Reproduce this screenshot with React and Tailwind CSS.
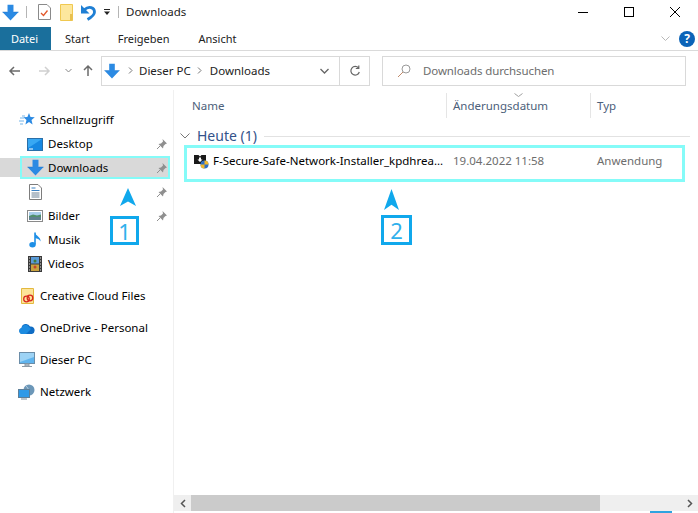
const F = "font-['Noto_Sans',sans-serif]";

function DownArrow({ s = 20, className = "" }) {
  return (
    <svg width={s} height={s} viewBox="0 0 20 20" className={className}>
      <path d="M6.500 1h7v8.500h6L10 19.500.500 9.500h6z" fill="#2b8ae3" />
      <path d="M.5 9.500h6M13.500 9.500h6" stroke="#1e73c8" strokeWidth=".6" />
    </svg>
  );
}
function Pin() {
  return (
    <svg width="12" height="12" viewBox="0 0 12 12" className="shrink-0">
      <path d="M6.500 1l4.500 4.500-1.500.5-2 2-.5 2.500L2.500 6l2.500-.5 2-2z" fill="#8f8f8f" />
      <path d="M4 8l-3 3" stroke="#8f8f8f" strokeWidth="1" />
    </svg>
  );
}
function Star() {
  return (
    <svg width="16" height="16" viewBox="0 0 16 16">
      <path d="M10 1l1.500 4 4.300.3-3.300 2.700 1.100 4.500L10 10l-3.600 2.500L7.500 8 4.400 5.300l4-.3z" fill="#2b8ae3" />
      <path d="M1 6h4M0 9h5M1 12h3M3 4h3" stroke="#74b5ea" strokeWidth="1" />
    </svg>
  );
}
function Desktop() {
  return (
    <svg width="16" height="13" viewBox="0 0 16 13">
      <rect x=".5" y=".5" width="15" height="12" fill="#1788e2" stroke="#2a6fa8" />
      <path d="M1 1h14L2 9.500H1z" fill="#38a8f3" />
      <path d="M2 11h4" stroke="#fff" />
    </svg>
  );
}
function DocIcon() {
  return (
    <svg width="13" height="16" viewBox="0 0 13 16">
      <path d="M.5.500h8.500l3.500 3.500v11.500H.5z" fill="#fff" stroke="#7d7d7d" />
      <path d="M2.500 4h4M2.500 6.500h8" stroke="#3b82c4" />
      <path d="M2.500 9h8M2.500 11h8M2.500 13h8" stroke="#6b8094" />
    </svg>
  );
}
function Pic() {
  return (
    <svg width="16" height="12" viewBox="0 0 16 12">
      <rect x=".5" y=".5" width="15" height="11" fill="#fff" stroke="#8a8a8a" />
      <rect x="2" y="2" width="12" height="4" fill="#a9cdea" />
      <path d="M2 6l4-1.500 4 1 4-1V7H2z" fill="#4f8f6a" />
      <rect x="2" y="7" width="12" height="3" fill="#5f7f8f" />
    </svg>
  );
}
function Note() {
  return (
    <svg width="12" height="16" viewBox="0 0 12 16">
      <path d="M6 .5v12" stroke="#1e8fe6" strokeWidth="1.600" />
      <ellipse cx="3.500" cy="12.800" rx="3.200" ry="2.700" fill="#1e8fe6" />
      <path d="M6 .5c.5 3.500 6 4 5.500 9-1-2.500-3.500-3-5.500-3.500z" fill="#1e8fe6" />
    </svg>
  );
}
function Film() {
  return (
    <svg width="14" height="16" viewBox="0 0 14 16">
      <rect width="14" height="16" fill="#3a3a3a" />
      <rect x="3" y="1" width="8" height="6.500" fill="#5a9bd8" />
      <rect x="3" y="8.500" width="8" height="6.500" fill="#c9a23f" />
      <circle cx="7" cy="5" r="1.500" fill="#3f7a3f" />
      <circle cx="7" cy="11" r="1.500" fill="#c2452d" />
      <path d="M1 2h1M1 5h1M1 8h1M1 11h1M1 14h1M12 2h1M12 5h1M12 8h1M12 11h1M12 14h1" stroke="#ddd" />
    </svg>
  );
}
function CC() {
  return (
    <svg width="13" height="16" viewBox="0 0 13 16">
      <path d="M.5.500h12v15H.5z" fill="#fde49a" stroke="#e3b93f" />
      <circle cx="5.500" cy="11" r="2.800" fill="none" stroke="#d8281f" strokeWidth="1.300" />
      <circle cx="9" cy="10" r="2.800" fill="none" stroke="#d8281f" strokeWidth="1.300" />
    </svg>
  );
}
function Cloud() {
  return (
    <svg width="16" height="11" viewBox="0 0 16 11">
      <path d="M3 11a3 3 0 0 1-.5-5.900A4.500 4.500 0 0 1 11 3.500 3.800 3.800 0 0 1 15.500 8 3 3 0 0 1 13 11z" fill="#0f6cc4" />
      <path d="M3 11a3 3 0 0 1-.5-5.900A4.500 4.500 0 0 1 8 2l4 4-5 5z" fill="#1c8be0" />
    </svg>
  );
}
function Monitor() {
  return (
    <svg width="16" height="16" viewBox="0 0 16 16">
      <rect x=".5" y=".5" width="15" height="11" fill="#5fb4ee" stroke="#6b8da8" />
      <path d="M1 1h14v4L1 10z" fill="#9dd3f5" />
      <path d="M6 12h4v2H6zM3 14.500h10" stroke="#8d9aa5" fill="#c5ccd2" />
    </svg>
  );
}
function Net() {
  return (
    <svg width="18" height="16" viewBox="0 0 18 16">
      <circle cx="11" cy="6" r="5.500" fill="#6c97b8" />
      <path d="M8 2c2 2 4 5 2 9" stroke="#c0d4e2" fill="none" />
      <rect x=".5" y="5.500" width="11" height="8" fill="#2f9ae8" stroke="#5d7f99" />
      <path d="M3 15h6" stroke="#7d8d99" />
    </svg>
  );
}
function Help() {
  return (
    <div className="w-4 h-4 rounded-full bg-[#0b63b8] text-white text-[12px] font-bold flex items-center justify-center leading-none">?</div>
  );
}
function Installer() {
  return (
    <svg width="15" height="15" viewBox="0 0 15 15">
      <path d="M0 1h4.500l1.500 1.500L7.500 1H12v9H0z" fill="#1a1a1a" />
      <path d="M5 3.500h2v2h1.500L6 8 3.500 5.500H5z" fill="#fff" />
      <circle cx="10.500" cy="10.500" r="4" fill="#2f6fc4" />
      <path d="M10.500 6.500a4 4 0 0 1 4 4h-4zM10.500 10.500v4a4 4 0 0 1-4-4z" fill="#f2b72a" />
    </svg>
  );
}

function NavRow({ icon, label, pin, selected }) {
  return (
    <div className={selected ? "h-[19px] w-[168px] mt-[2px] mb-[3px] flex items-center bg-[#d9d9d9]" : "h-6 flex items-center"}>
      <div className="w-[48px] pl-[26px] pr-[4px] shrink-0 flex justify-center">{icon}</div>
      <span className="flex-1 text-[11.5px] text-black whitespace-nowrap">{label}</span>
      {pin && <div className={selected ? "" : "pr-[5px]"}><Pin /></div>}
    </div>
  );
}
function TopRow({ icon, label, mt }) {
  return (
    <div className={`h-6 flex items-center ${mt}`}>
      <div className="w-[40px] pl-[16px] pr-[2px] shrink-0 flex justify-center">{icon}</div>
      <span className="text-[11.5px] text-black whitespace-nowrap">{label}</span>
    </div>
  );
}
function Marker({ n, className, arrowClass }) {
  return (
    <>
      <svg viewBox="0 0 16 20" preserveAspectRatio="none" className={`absolute ${arrowClass}`}>
        <path d="M8 0l8 20-8-5-8 5z" fill="#10a8ec" />
      </svg>
      <div className={`absolute border-[3px] border-[#10a8ec] flex items-center justify-center text-[22px] leading-none text-[#2fb0ec] ${className}`}>{n}</div>
    </>
  );
}

export default function App() {
  return (
    <div className={`${F} relative w-[698px] h-[513px] bg-white overflow-hidden flex flex-col`}>
      {/* title bar */}
      <div className="h-[27px] pb-[3px] flex items-center shrink-0">
        <DownArrow s={17} className="ml-[2px]" />
        <div className="w-px h-3 bg-[#b5b5b5] ml-[7px]" />
        <svg width="13" height="16" viewBox="0 0 13 16" className="ml-[11px]">
          <path d="M.5.500h8.500l3.500 3.500v11.500H.5z" fill="#fff" stroke="#8a8a8a" />
          <path d="M3 9l2.500 2.500L9.500 6.500" stroke="#e2572a" strokeWidth="1.300" fill="none" />
        </svg>
        <svg width="13" height="17" viewBox="0 0 13 17" className="ml-[9px]">
          <path d="M.5.500h12v16H.5z" fill="#fde79d" stroke="#f0c850" />
          <path d="M10 10h2.500v6.500H10z" fill="#e8c050" />
        </svg>
        <svg width="15" height="17" viewBox="0 0 15 17" className="ml-[8px]">
          <path d="M0 1v8.500h8.500z" fill="#1f7fd4" />
          <path d="M3.500 5.500C8 1.500 13.500 3.500 13.500 8c0 3.500-3.500 5.500-7 7.500" stroke="#1f7fd4" strokeWidth="2.800" fill="none" />
        </svg>
        <svg width="8" height="8" viewBox="0 0 8 8" className="ml-[7px]">
          <path d="M1 1.500h6" stroke="#222" />
          <path d="M1 3.500h6L4 7z" fill="#222" />
        </svg>
        <div className="w-px h-3 bg-[#b5b5b5] ml-[7px]" />
        <span className="text-[11.5px] ml-[7px] text-[#222]">Downloads</span>
        <div className="flex-1" />
        <div className="w-[46px] flex justify-center">
          <svg width="10" height="10" viewBox="0 0 10 10"><path d="M0 5.500h10" stroke="#000" /></svg>
        </div>
        <div className="w-[46px] flex justify-center">
          <svg width="10" height="10" viewBox="0 0 10 10"><rect x=".5" y=".5" width="9" height="9" fill="none" stroke="#000" /></svg>
        </div>
        <div className="w-[46px] flex justify-center">
          <svg width="10" height="10" viewBox="0 0 10 10"><path d="M0 0l10 10M10 0L0 10" stroke="#000" /></svg>
        </div>
      </div>
      {/* tabs */}
      <div className="h-[24px] flex items-stretch border-b border-[#dadada] shrink-0 text-[11px] text-[#222]">
        <div className="w-[51px] bg-[#1a6f9c] text-white flex items-center justify-center pr-[2px] pt-px">Datei</div>
        <div className="ml-[14px] pt-px flex items-center">Start</div>
        <div className="ml-[28px] pt-px flex items-center">Freigeben</div>
        <div className="ml-[29px] pt-px flex items-center">Ansicht</div>
        <div className="flex-1" />
        <div className="flex items-center gap-[9px] pr-[3px]">
          <svg width="9" height="5" viewBox="0 0 9 5"><path d="M.5.500l4 4 4-4" stroke="#b8b8b8" fill="none" /></svg>
          <Help />
        </div>
      </div>
      {/* address */}
      <div className="h-[39px] flex items-center shrink-0">
        <div className="w-[101px] flex items-center pl-[8px] shrink-0">
          <svg width="13" height="12" viewBox="0 0 13 12"><path d="M12 6H2M6 2L2 6l4 4" stroke="#6b6b6b" strokeWidth="1.500" fill="none" /></svg>
          <svg width="13" height="12" viewBox="0 0 13 12" className="ml-[17px]"><path d="M1 6h10M7 2l4 4-4 4" stroke="#d0d0d0" strokeWidth="1.500" fill="none" /></svg>
          <svg width="7" height="5" viewBox="0 0 7 5" className="ml-[14px]"><path d="M.5 1l3 3 3-3" stroke="#888" fill="none" /></svg>
          <svg width="12" height="13" viewBox="0 0 12 13" className="ml-[10px]"><path d="M6 12V2M2 6l4-4 4 4" stroke="#6b6b6b" strokeWidth="1.500" fill="none" /></svg>
        </div>
        <div className="w-[269px] h-[30px] border border-[#d9d9d9] flex items-center shrink-0">
          <DownArrow s={16} className="ml-[2px]" />
          <svg width="5" height="7" viewBox="0 0 5 7" className="ml-[8px]"><path d="M1 .5l3 3-3 3" stroke="#777" fill="none" /></svg>
          <span className="text-[11.5px] ml-[6px] text-[#222]">Dieser PC</span>
          <svg width="5" height="7" viewBox="0 0 5 7" className="ml-[6px]"><path d="M1 .5l3 3-3 3" stroke="#777" fill="none" /></svg>
          <span className="text-[11.5px] ml-[8px] text-[#222]">Downloads</span>
          <div className="flex-1" />
          <svg width="9" height="6" viewBox="0 0 9 6" className="mr-[10px]"><path d="M.5 1l4 4 4-4" stroke="#666" strokeWidth="1.300" fill="none" /></svg>
          <div className="w-[30px] h-full border-l border-[#d9d9d9] flex items-center justify-center">
            <svg width="12" height="12" viewBox="0 0 12 12"><path d="M9.500 3A4.300 4.300 0 1 0 10.300 7M9.800 .5V3.500H6.800" stroke="#666" strokeWidth="1.200" fill="none" /></svg>
          </div>
        </div>
        <div className="w-[304px] h-[30px] ml-[12px] border border-[#d9d9d9] flex items-center shrink-0">
          <svg width="14" height="14" viewBox="0 0 14 14" className="ml-[14px]"><circle cx="9" cy="5" r="4" stroke="#9a9a9a" fill="none" /><path d="M6 8l-5 5" stroke="#c08a6a" /></svg>
          <span className="text-[11.5px] ml-[12px] text-[#6d6d6d] tracking-[-0.1px]">Downloads durchsuchen</span>
        </div>
      </div>
      {/* body */}
      <div className="flex-1 flex min-h-0">
        <div className="w-[174px] shrink-0 border-r border-[#f0f0f0] pt-[18px]">
          <TopRow icon={<Star />} label="Schnellzugriff" />
          <NavRow icon={<Desktop />} label="Desktop" pin />
          <NavRow icon={<DownArrow s={17} />} label="Downloads" pin selected />
          <NavRow icon={<DocIcon />} label="" pin />
          <NavRow icon={<Pic />} label="Bilder" pin />
          <NavRow icon={<Note />} label="Musik" />
          <NavRow icon={<Film />} label="Videos" />
          <TopRow icon={<CC />} label="Creative Cloud Files" mt="mt-2" />
          <TopRow icon={<Cloud />} label="OneDrive - Personal" mt="mt-2" />
          <TopRow icon={<Monitor />} label="Dieser PC" mt="mt-2" />
          <TopRow icon={<Net />} label="Netzwerk" mt="mt-2" />
        </div>
        <div className="flex-1 flex flex-col min-w-0">
          <div className="h-[25px] mt-[3px] flex items-stretch text-[11.5px] text-[#4c607a] shrink-0">
            <div className="w-[273px] pl-[18px] flex items-center border-r border-[#e5e5e5]">Name</div>
            <div className="relative w-[144px] pl-[6px] flex items-center border-r border-[#e5e5e5] whitespace-nowrap">
              Änderungsdatum
              <svg width="9" height="5" viewBox="0 0 9 5" className="absolute left-[67px] top-0"><path d="M.5.500l4 3 4-3" stroke="#a0a0a0" fill="none" /></svg>
            </div>
            <div className="pl-[6px] flex items-center">Typ</div>
          </div>
          <div className="h-[20px] mt-[8px] flex items-center shrink-0">
            <svg width="10" height="6" viewBox="0 0 10 6" className="ml-[6px]"><path d="M.5.500l4.500 4.500 4.500-4.500" stroke="#777" fill="none" /></svg>
            <span className="text-[14px] text-[#33528a] ml-[7px] leading-none">Heute (1)</span>
            <div className="flex-1 h-px bg-[#e2e2e2] ml-[7px] mr-[8px]" />
          </div>
          <div className="h-[28px] ml-[13px] mr-[14px] mt-[1px] flex items-center shrink-0 text-[11.5px]">
            <div className="ml-[7px] flex"><Installer /></div>
            <span className="ml-[4px] w-[240px] truncate text-black">F-Secure-Safe-Network-Installer_kpdhrea...</span>
            <span className="w-[144px] text-[#6d6d6d]">19.04.2022 11:58</span>
            <span className="text-[#6d6d6d]">Anwendung</span>
          </div>
          <div className="flex-1" />
          <div className="h-[16px] mb-[2px] bg-[#efefef] flex items-stretch shrink-0">
            <div className="w-[17px] flex items-center justify-center">
              <svg width="6" height="9" viewBox="0 0 6 9"><path d="M5 1L1.500 4.500 5 8" stroke="#555" strokeWidth="1.500" fill="none" /></svg>
            </div>
            <div className="w-[409px] bg-[#cbcbcb]" />
            <div className="flex-1" />
            <div className="w-[17px] flex items-center justify-center">
              <svg width="6" height="9" viewBox="0 0 6 9"><path d="M1 1l3.500 3.500L1 8" stroke="#555" strokeWidth="1.500" fill="none" /></svg>
            </div>
          </div>
        </div>
      </div>
      {/* annotations */}
      <div className="absolute left-[20px] top-[156px] w-[150px] h-[23px] border-2 border-[#85fbf8]" />
      <div className="absolute left-[184px] top-[145px] w-[501px] h-[37px] border-[3px] border-[#85fbf8]" />
      <Marker n="1" arrowClass="left-[120px] top-[188px] w-[16px] h-[18px]" className="left-[110px] top-[216px] w-[29px] h-[29px]" />
      <Marker n="2" arrowClass="left-[384px] top-[189px] w-[15px] h-[21px]" className="left-[381px] top-[215px] w-[31px] h-[30px]" />
      <div className="absolute left-[650px] top-[511px] w-[22px] h-[4px] border-2 border-[#2ea3e0]" />
    </div>
  );
}
